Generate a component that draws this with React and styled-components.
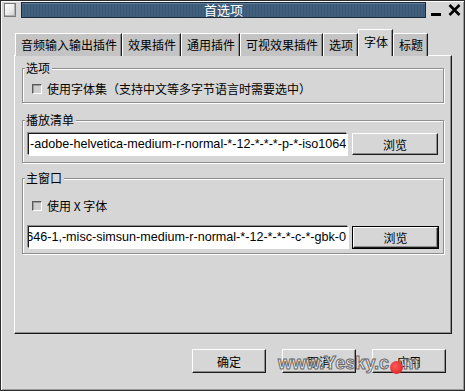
import React from "react";
import styled, { createGlobalStyle } from "styled-components";

const Global = createGlobalStyle`
  html, body { margin: 0; padding: 0; background: #d6d6d6; }
  body { font-family: "Noto Sans CJK SC", "Liberation Sans", sans-serif; }
  * { box-sizing: border-box; }
`;

const Window = styled.div`
  position: relative;
  width: 465px;
  height: 391px;
  background: #d6d6d6;
  border: 1px solid #2e2e2e;
  box-shadow: inset 1px 1px 0 #ffffff, inset -1px -1px 0 #9a9a9a;
  display: flex;
  flex-direction: column;
  overflow: hidden;
  font-size: 12px;
  color: #000;
`;

const TitleRow = styled.div`
  display: flex;
  align-items: flex-start;
  height: 19px;
  padding: 1px 0 0 3px;
`;

const WinIcon = styled.div`
  width: 12px;
  height: 14px;
  margin-top: 1px;
  background: linear-gradient(135deg, #ffffff 0%, #e8e8e8 60%, #c8c8c8 100%);
  border: 1px solid #7a7a7a;
  box-shadow: inset -1px -1px 0 #b0b0b0;
`;

const TitleBar = styled.div`
  margin-left: 5px;
  width: 405px;
  height: 16px;
  background: repeating-linear-gradient(90deg, #40607e 0px, #40607e 2px, #3a5876 2px, #3a5876 3px);
  border: 1px solid #1b2a38;
  box-shadow: inset 0 1px 0 #5f7d99;
  display: flex;
  align-items: center;
  justify-content: center;
  color: #ffffff;
  font-size: 13px;
  line-height: 14px;
`;

const TitleButtons = styled.div`
  display: flex;
  align-items: flex-start;
  gap: 6px;
  margin-left: 4px;
  margin-top: 2px;
`;

const TabsRow = styled.div`
  position: relative;
  z-index: 1;
  display: flex;
  align-items: flex-end;
  height: 27px;
  margin: 9px 0 0 14px;
`;

const Tab = styled.div`
  height: ${(p) => (p.$active ? "27px" : "23px")};
  padding: 0 4px 0 5px;
  display: flex;
  align-items: center;
  padding-bottom: ${(p) => (p.$active ? "3px" : "0")};
  background: ${(p) => (p.$active ? "#d6d6d6" : "#c4c4c4")};
  border-top: 1px solid #ffffff;
  border-left: 1px solid #ffffff;
  border-right: 1px solid #1a1a1a;
  box-shadow: inset -1px 0 0 #8e8e8e;
  font-size: 12px;
  line-height: 14px;
  white-space: nowrap;
`;

const Panel = styled.div`
  margin: -1px 0 0 13px;
  width: 438px;
  height: 279px;
  border-top: 1px solid #ffffff;
  border-left: 1px solid #ffffff;
  border-right: 1px solid #1a1a1a;
  border-bottom: 1px solid #1a1a1a;
  box-shadow: inset -1px -1px 0 #8e8e8e;
  padding: 12px 7px 0 7px;
  display: flex;
  flex-direction: column;
`;

const Frame = styled.div`
  position: relative;
  margin-top: ${(p) => p.$mt || 0}px;
  border: 1px solid #8e8e8e;
  box-shadow: inset 1px 1px 0 #ffffff, 1px 1px 0 #ffffff;
  padding: ${(p) => p.$pad};
  display: flex;
  flex-direction: column;
  gap: ${(p) => p.$gap || 0}px;
`;

const Legend = styled.span`
  position: absolute;
  top: -8px;
  left: 2px;
  padding: 0 2px 0 1px;
  background: #d6d6d6;
  font-size: 12px;
  line-height: 14px;
`;

const CheckRow = styled.label`
  display: flex;
  align-items: center;
  height: 16px;
  padding-left: 4px;
  gap: 5px;
  font-size: 12px;
  line-height: 14px;
`;

const CheckBox = styled.span`
  width: 10px;
  height: 10px;
  background: #cfcfcf;
  border-top: 1px solid #5a5a5a;
  border-left: 1px solid #5a5a5a;
  border-right: 1px solid #ffffff;
  border-bottom: 1px solid #ffffff;
  box-shadow: inset 1px 1px 0 #9a9a9a;
`;

const FieldRow = styled.div`
  display: flex;
  align-items: center;
  gap: 5px;
  height: 22px;
`;

const TextBox = styled.div`
  width: 320px;
  height: 22px;
  background: #ffffff;
  border-top: 1px solid #1a1a1a;
  border-left: 1px solid #1a1a1a;
  border-right: 1px solid #ffffff;
  border-bottom: 1px solid #ffffff;
  box-shadow: -1px -1px 0 #8e8e8e, 1px 1px 0 #ffffff;
  display: flex;
  align-items: center;
  justify-content: ${(p) => (p.$end ? "flex-end" : "flex-start")};
  overflow: hidden;
  padding: 0 1px 0 1px;
  font-family: "Liberation Sans", "DejaVu Sans", sans-serif;
  font-size: 12.6px;
  white-space: nowrap;
`;

const FieldText = styled.span`
  flex: none;
`;

const Button = styled.button`
  width: ${(p) => p.$w}px;
  height: ${(p) => p.$h}px;
  padding: 0;
  background: #d6d6d6;
  font-family: "Noto Sans CJK SC", sans-serif;
  font-size: 12px;
  color: #000;
  border-top: 1px solid #ffffff;
  border-left: 1px solid #ffffff;
  border-right: 1px solid #1a1a1a;
  border-bottom: 1px solid #1a1a1a;
  box-shadow: inset -1px -1px 0 #8e8e8e;
  ${(p) => (p.$default ? "outline: 1px solid #000; outline-offset: 0;" : "")}
`;

const Footer = styled.div`
  display: flex;
  justify-content: flex-end;
  gap: 16px;
  margin-top: 15px;
  padding-right: 18px;
`;

const Watermark = styled.div`
  position: absolute;
  left: 277px;
  top: 350px;
  display: flex;
  align-items: center;
  font-family: "Liberation Sans", "DejaVu Sans", sans-serif;
  font-weight: 700;
  font-size: 18px;
  line-height: 20px;
  color: rgba(240, 240, 240, 0.8);
  -webkit-text-stroke: 1px #6a6a6a;
  pointer-events: none;
`;

const RedDot = styled.span`
  display: inline-block;
  width: 13px;
  height: 13px;
  border-radius: 50%;
  background: radial-gradient(circle at 40% 40%, #ff5a5a, #d01818);
  margin: 10px 0 0 1px;
`;

const tabs = ["音频输入输出插件", "效果插件", "通用插件", "可视效果插件", "选项", "字体", "标题"];
const fontValue = "-adobe-helvetica-medium-r-normal-*-12-*-*-*-p-*-iso10646-1,-misc-simsun-medium-r-normal-*-12-*-*-*-c-*-gbk-0";

export default function App() {
  return (
    <>
      <Global />
      <Window>
        <TitleRow>
          <WinIcon />
          <TitleBar>首选项</TitleBar>
          <TitleButtons>
            <svg width="12" height="14" viewBox="0 0 12 14">
              <rect x="1" y="9" width="10" height="3" fill="#000" />
            </svg>
            <svg width="13" height="12" viewBox="0 0 13 12">
              <path d="M1.5 1 L11.5 11 M11.5 1 L1.5 11" stroke="#000" strokeWidth="2.6" />
            </svg>
          </TitleButtons>
        </TitleRow>
        <TabsRow>
          {tabs.map((t) => (
            <Tab key={t} $active={t === "字体"}>
              {t}
            </Tab>
          ))}
        </TabsRow>
        <Panel>
          <Frame $pad="12px 5px 5px 5px">
            <Legend>选项</Legend>
            <CheckRow>
              <CheckBox />
              使用字体集（支持中文等多字节语言时需要选中）
            </CheckRow>
          </Frame>
          <Frame $mt={17} $pad="12px 5px 7px 5px">
            <Legend>播放清单</Legend>
            <FieldRow>
              <TextBox>
                <FieldText>{fontValue}</FieldText>
              </TextBox>
              <Button $w={86} $h={22}>浏览</Button>
            </FieldRow>
          </Frame>
          <Frame $mt={15} $pad="19px 5px 5px 5px" $gap={12}>
            <Legend>主窗口</Legend>
            <CheckRow>
              <CheckBox />
              使用 X 字体
            </CheckRow>
            <FieldRow>
              <TextBox $end>
                <FieldText>{fontValue}</FieldText>
              </TextBox>
              <Button $w={85} $h={21} $default>浏览</Button>
            </FieldRow>
          </Frame>
        </Panel>
        <Footer>
          <Button $w={74} $h={24}>确定</Button>
          <Button $w={74} $h={24}>取消</Button>
          <Button $w={74} $h={24}>应用</Button>
        </Footer>
        <Watermark>
          www.Yesky.c<RedDot />m
        </Watermark>
      </Window>
    </>
  );
}
